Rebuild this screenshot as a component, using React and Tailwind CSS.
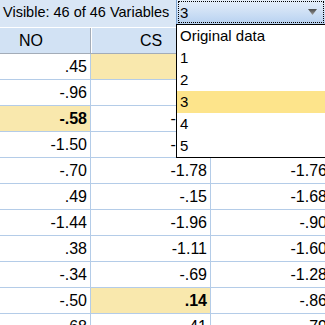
const rows = [
    { v: ['.45', '-.62', '-1.33'], hl: 1, bold: false },
    { v: ['-.96', '.27', '-.52'] },
    { v: ['-.58', '-1.02', '-1.40'], hl: 0, bold: true },
    { v: ['-1.50', '-1.21', '-.77'] },
    { v: ['-.70', '-1.78', '-1.76'] },
    { v: ['.49', '-.15', '-1.68'] },
    { v: ['-1.44', '-1.96', '-.90'] },
    { v: ['.38', '-1.11', '-1.60'] },
    { v: ['-.34', '-.69', '-1.28'] },
    { v: ['-.50', '.14', '-.86'], hl: 1, bold: true },
    { v: ['.68', '.41', '.79'] },
];

const options = ['Original data', '1', '2', '3', '4', '5'];

export default function App() {
    return (
        <div className="relative h-[325px] w-[325px] overflow-hidden bg-white font-['Liberation_Sans',Arial,sans-serif] text-black">
            {/* toolbar */}
            <div className="flex h-[27px] bg-[#d9e6f5]">
                <div className="w-[176px] pl-[3px] text-[14.5px] leading-[25px]">Visible: 46 of 46 Variables</div>
                <div className="relative flex-1">
                    <div className="h-[24px] border-l border-[#7da2ce] bg-linear-to-b from-[#e6effa] to-[#b7d1f0] p-[1px]">
                        <div className="flex h-full items-center justify-between border border-dotted border-black pl-[1px] pr-[6px] text-[15px] leading-none">
                            <span>3</span>
                            <svg width="9" height="6" viewBox="0 0 9 6">
                                <defs>
                                    <linearGradient id="arr" x1="0" y1="0" x2="0" y2="1">
                                        <stop offset="0" stopColor="#4a4a4a" />
                                        <stop offset="1" stopColor="#9a9a9a" />
                                    </linearGradient>
                                </defs>
                                <path d="M0 0 H9 L4.5 6 Z" fill="url(#arr)" />
                            </svg>
                        </div>
                    </div>
                    <div className="absolute left-0 top-[24px] z-10 w-[152px] border border-black bg-white">
                        {options.map((o) => (
                            <div
                                key={o}
                                className={`h-[22px] pl-[3px] text-[15px] leading-[22px] ${o === '3' ? 'bg-[#fde48b]' : ''}`}
                            >
                                {o}
                            </div>
                        ))}
                    </div>
                </div>
            </div>

            {/* data grid */}
            <div className="-ml-[29px] w-[390px]">
                <div className="flex h-[27px] border-y border-t-white border-b-[#a3acb8] bg-[#d2e2f4]">
                    {['NO', 'CS', 'EX'].map((h) => (
                        <div
                            key={h}
                            className="w-[120px] border-l border-r border-l-white border-r-[#a3acb8] text-center text-[16px] leading-[25px]"
                        >
                            {h}
                        </div>
                    ))}
                </div>
                {rows.map((r, i) => (
                    <div key={i} className="flex h-[26px]">
                        {r.v.map((c, j) => (
                            <div
                                key={j}
                                className={`w-[120px] border-b border-r border-[#b4cce8] pr-[3px] text-right text-[16px] leading-[25px] ${
                                    r.hl === j ? 'bg-[#f9e8ad]' : ''
                                } ${r.hl === j && r.bold ? 'font-bold' : ''}`}
                            >
                                {c}
                            </div>
                        ))}
                    </div>
                ))}
            </div>
        </div>
    );
}
